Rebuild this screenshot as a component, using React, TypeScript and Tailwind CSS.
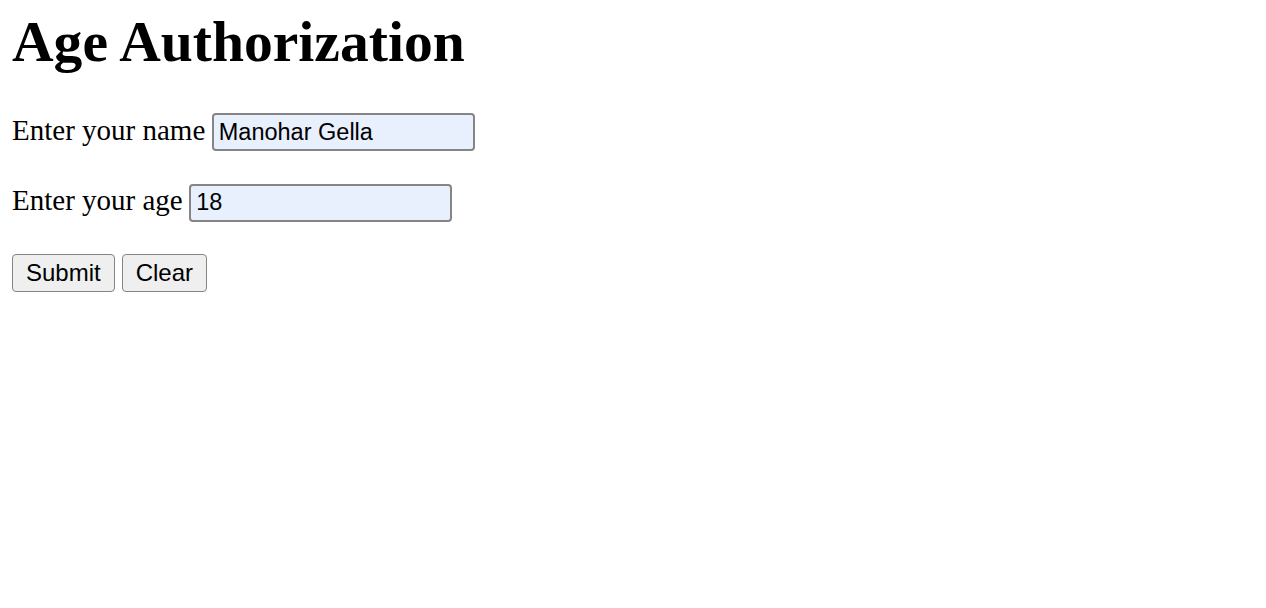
import React, { useState } from 'react'

const App = () => {
  const [name, setName] = useState('Manohar Gella')
  const [age, setAge] = useState('18')

  const clear = () => {
    setName('')
    setAge('')
  }

  const inputCls =
    "w-[263px] h-[38px] px-[5px] py-0 border-2 border-[#858585] rounded-[4px] bg-[#e8f0fe] text-black text-[23.5px] font-['Liberation_Sans',Arial,sans-serif] outline-none"

  const buttonCls =
    "h-[38px] px-[13px] border border-[#858585] rounded-[4px] bg-[#efefef] text-black text-[24px] font-['Liberation_Sans',Arial,sans-serif]"

  return (
    <div className="min-h-screen bg-white px-[12px] pt-[9px] text-black font-['Liberation_Serif','Times_New_Roman',serif]">
      <h1 className="text-[57.6px] font-bold leading-[66px]">Age Authorization</h1>

      <form className="mt-[38px] flex flex-col gap-[32.5px]" onSubmit={e => e.preventDefault()}>
        {/* Name */}
        <div className="flex items-baseline gap-[6.5px]">
          <label htmlFor="name" className="text-[29px] leading-[33px]">Enter your name</label>
          <input id="name" type="text" value={name} onChange={e => setName(e.target.value)} className={inputCls} />
        </div>

        {/* Age */}
        <div className="flex items-baseline gap-[6.5px]">
          <label htmlFor="age" className="text-[29px] leading-[33px]">Enter your age</label>
          <input id="age" type="text" value={age} onChange={e => setAge(e.target.value)} className={inputCls} />
        </div>

        {/* Actions */}
        <div className="flex items-center gap-[7px]">
          <button type="submit" className={buttonCls}>Submit</button>
          <button type="button" onClick={clear} className={buttonCls}>Clear</button>
        </div>
      </form>
    </div>
  )
}

export default App
